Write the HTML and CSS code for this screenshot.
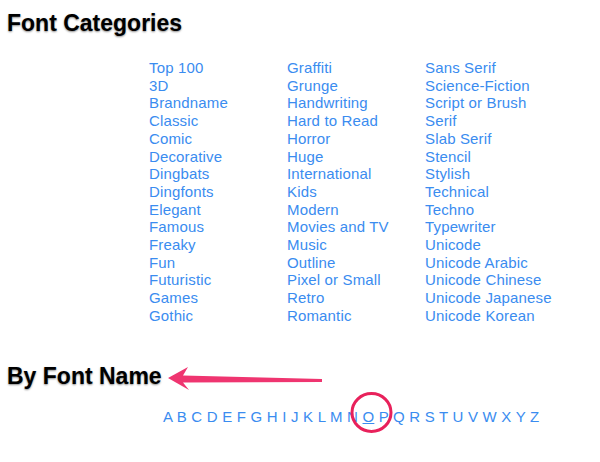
FILE: index.html
```html
<!DOCTYPE html>
<html lang="en">
<head>
    <meta charset="UTF-8">
    <meta name="viewport" content="width=device-width, initial-scale=1.0">
    <title>Font Categories</title>
    <link rel="stylesheet" href="styles.css">
</head>
<body>
    <h2 class="section-title">Font Categories</h2>

    <!-- список категорий в три колонки -->
    <div class="categories">
        <ul>
            <li><a href="#">Top 100</a></li>
            <li><a href="#">3D</a></li>
            <li><a href="#">Brandname</a></li>
            <li><a href="#">Classic</a></li>
            <li><a href="#">Comic</a></li>
            <li><a href="#">Decorative</a></li>
            <li><a href="#">Dingbats</a></li>
            <li><a href="#">Dingfonts</a></li>
            <li><a href="#">Elegant</a></li>
            <li><a href="#">Famous</a></li>
            <li><a href="#">Freaky</a></li>
            <li><a href="#">Fun</a></li>
            <li><a href="#">Futuristic</a></li>
            <li><a href="#">Games</a></li>
            <li><a href="#">Gothic</a></li>
        </ul>
        <ul>
            <li><a href="#">Graffiti</a></li>
            <li><a href="#">Grunge</a></li>
            <li><a href="#">Handwriting</a></li>
            <li><a href="#">Hard to Read</a></li>
            <li><a href="#">Horror</a></li>
            <li><a href="#">Huge</a></li>
            <li><a href="#">International</a></li>
            <li><a href="#">Kids</a></li>
            <li><a href="#">Modern</a></li>
            <li><a href="#">Movies and TV</a></li>
            <li><a href="#">Music</a></li>
            <li><a href="#">Outline</a></li>
            <li><a href="#">Pixel or Small</a></li>
            <li><a href="#">Retro</a></li>
            <li><a href="#">Romantic</a></li>
        </ul>
        <ul>
            <li><a href="#">Sans Serif</a></li>
            <li><a href="#">Science-Fiction</a></li>
            <li><a href="#">Script or Brush</a></li>
            <li><a href="#">Serif</a></li>
            <li><a href="#">Slab Serif</a></li>
            <li><a href="#">Stencil</a></li>
            <li><a href="#">Stylish</a></li>
            <li><a href="#">Technical</a></li>
            <li><a href="#">Techno</a></li>
            <li><a href="#">Typewriter</a></li>
            <li><a href="#">Unicode</a></li>
            <li><a href="#">Unicode Arabic</a></li>
            <li><a href="#">Unicode Chinese</a></li>
            <li><a href="#">Unicode Japanese</a></li>
            <li><a href="#">Unicode Korean</a></li>
        </ul>
    </div>

    <h2 class="section-title name-title">By Font Name</h2>

    <div class="alphabet">
        <a href="#">A</a> <a href="#">B</a> <a href="#">C</a> <a href="#">D</a> <a href="#">E</a>
        <a href="#">F</a> <a href="#">G</a> <a href="#">H</a> <a href="#">I</a> <a href="#">J</a>
        <a href="#">K</a> <a href="#">L</a> <a href="#">M</a> <a href="#">N</a>
        <a href="#" class="current">O</a> <a href="#">P</a> <a href="#">Q</a> <a href="#">R</a>
        <a href="#">S</a> <a href="#">T</a> <a href="#">U</a> <a href="#">V</a> <a href="#">W</a>
        <a href="#">X</a> <a href="#">Y</a> <a href="#">Z</a>
    </div>

    <!-- пометки поверх скриншота: стрелка и кружок -->
    <svg class="annotations" viewBox="0 0 600 462">
        <polygon class="mark" points="168,378 188,367 183,375.5 322,379 322,382 183,382.5 189,390"/>
        <ellipse class="ring" cx="371.5" cy="412.5" rx="19.5" ry="19"/>
    </svg>
</body>
</html>
```

FILE: styles.css
```css
body {
    margin: 0;
    font-family: "Liberation Sans", Arial, sans-serif;
    background: #fff;
}
.section-title {
    margin: 10px 0 0 7px;
    font-size: 23px;
    line-height: 26px;
    font-weight: bold;
    color: #000;
    text-shadow: 0 1px 2px rgba(0, 0, 0, 0.45);
}
.name-title {
    margin-top: 38px;
}
.categories {
    display: grid;
    grid-template-columns: 138px 138px 160px;
    margin-top: 23px;
    padding-left: 149px;
}
.categories ul {
    list-style: none;
    margin: 0;
    padding: 0;
}
.categories li {
    font-size: 15px;
    line-height: 17.7px;
    letter-spacing: 0.15px;
    white-space: nowrap;
}
a {
    color: #3a8cf0;
    text-decoration: none;
}
.alphabet {
    margin-top: 19px;
    padding-left: 163px;
    font-size: 15px;
    line-height: 18px;
    letter-spacing: 0.2px;
}
.alphabet .current {
    text-decoration: underline;
}
.annotations {
    position: fixed;
    left: 0;
    top: 0;
    width: 600px;
    height: 462px;
    overflow: visible;
    pointer-events: none;
}
.mark {
    fill: #ef3570;
}
.ring {
    fill: none;
    stroke: #e8215b;
    stroke-width: 3;
}
```
